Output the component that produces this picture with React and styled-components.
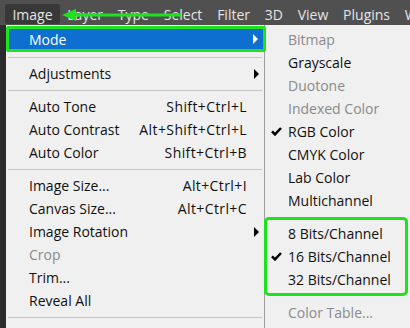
import React from "react";
import styled, { createGlobalStyle } from "styled-components";

const GlobalStyle = createGlobalStyle`
  html, body {
    margin: 0;
    padding: 0;
    background: #f0f0f0;
  }
`;

const GREEN = "#1fe21f";

const Page = styled.div`
  position: relative;
  width: 410px;
  height: 328px;
  overflow: hidden;
  background: #f0f0f0;
  font-family: "Open Sans", "Noto Sans", sans-serif;
  font-size: 14px;
`;

const MenuBar = styled.div`
  display: flex;
  align-items: flex-end;
  height: 24px;
  padding: 0 0 1px 5px;
  background: #505050;
  white-space: nowrap;
`;

const BarItem = styled.div`
  height: 20px;
  line-height: 21px;
  padding: 0 7.4px;
  border-radius: 2px;
  color: #e4e4e4;
  font-size: 14px;
  background: ${({ $active }) => ($active ? "#383838" : "transparent")};
`;

const Body = styled.div`
  display: flex;
  height: 303px;
`;

const Strip = styled.div`
  width: 6px;
  background: #2c2c2c;
`;

const Menu = styled.div`
  width: 258px;
  padding-top: 1px;
  border-right: 1px solid #9c9c9c;
  background: #f0f0f0;
`;

const Row = styled.div`
  display: flex;
  align-items: center;
  height: 23px;
  padding-left: 23px;
  white-space: nowrap;
  color: ${({ $disabled }) => ($disabled ? "#8a8a8a" : "#101010")};
`;

const ActiveRow = styled(Row)`
  position: relative;
  z-index: 1;
  height: 20px;
  margin-right: -2px;
  padding-left: 20px;
  border: 3px solid ${GREEN};
  border-radius: 2px;
  background: #0d6fd0;
  color: #ffffff;
`;

const Label = styled.span`
  flex: 1;
`;

const Shortcut = styled.span`
  text-align: right;
  letter-spacing: 0.4px;
`;

const ArrowCell = styled.span`
  display: flex;
  width: 17px;
  padding-left: 7px;
  box-sizing: border-box;
`;

const Triangle = styled.span`
  width: 0;
  height: 0;
  border-top: 5px solid transparent;
  border-bottom: 5px solid transparent;
  border-left: 5px solid ${({ $light }) => ($light ? "#ffffff" : "#000000")};
`;

const Separator = styled.div`
  height: 1px;
  margin: 5px 2px 4px 2px;
  background: #c6c6c6;
`;

const SubMenu = styled.div`
  flex: 1;
  padding-top: 3px;
  background: #f0f0f0;
`;

const SubRow = styled.div`
  display: grid;
  grid-template-columns: 23px 1fr;
  align-items: center;
  height: 23px;
  white-space: nowrap;
  color: ${({ $disabled }) => ($disabled ? "#8a8a8a" : "#101010")};
`;

const CheckCell = styled.span`
  display: flex;
  justify-content: center;
  padding-right: 1px;
`;

const Group = styled.div`
  margin: 5px 2px 5px -1px;
  padding: 2px 0;
  border: 3px solid ${GREEN};
  border-radius: 5px;

  & > ${SubRow} {
    margin-left: -2px;
  }
`;

const Overlay = styled.svg`
  position: absolute;
  left: 0;
  top: 0;
  pointer-events: none;
`;

const Check = () => (
  <svg width="11" height="9" viewBox="0 0 11 9">
    <path d="M1 4.3 L4 7.4 L10 1" fill="none" stroke="#000" strokeWidth="2.5" />
  </svg>
);

const barItems = ["Image", "Layer", "Type", "Select", "Filter", "3D", "View", "Plugins", "Window"];

const groups = [
  [{ label: "Adjustments", sub: true }],
  [
    { label: "Auto Tone", key: "Shift+Ctrl+L" },
    { label: "Auto Contrast", key: "Alt+Shift+Ctrl+L" },
    { label: "Auto Color", key: "Shift+Ctrl+B" },
  ],
  [
    { label: "Image Size...", key: "Alt+Ctrl+I" },
    { label: "Canvas Size...", key: "Alt+Ctrl+C" },
    { label: "Image Rotation", sub: true },
    { label: "Crop", disabled: true },
    { label: "Trim..." },
    { label: "Reveal All" },
  ],
];

const modes = [
  { label: "Bitmap", disabled: true },
  { label: "Grayscale" },
  { label: "Duotone", disabled: true },
  { label: "Indexed Color", disabled: true },
  { label: "RGB Color", checked: true },
  { label: "CMYK Color" },
  { label: "Lab Color" },
  { label: "Multichannel" },
];

const bits = [
  { label: "8 Bits/Channel" },
  { label: "16 Bits/Channel", checked: true },
  { label: "32 Bits/Channel" },
];

const renderSub = (item) => (
  <SubRow key={item.label} $disabled={item.disabled}>
    <CheckCell>{item.checked && <Check />}</CheckCell>
    <span>{item.label}</span>
  </SubRow>
);

export default function App() {
  return (
    <>
      <GlobalStyle />
      <Page>
        <MenuBar>
          {barItems.map((name, i) => (
            <BarItem key={name} $active={i === 0}>
              {name}
            </BarItem>
          ))}
        </MenuBar>
        <Body>
          <Strip />
          <Menu>
            <ActiveRow>
              <Label>Mode</Label>
              <ArrowCell>
                <Triangle $light />
              </ArrowCell>
            </ActiveRow>
            {groups.map((group, gi) => (
              <React.Fragment key={gi}>
                <Separator />
                {group.map((item) => (
                  <Row key={item.label} $disabled={item.disabled}>
                    <Label>{item.label}</Label>
                    {item.key && <Shortcut>{item.key}</Shortcut>}
                    <ArrowCell>{item.sub && <Triangle />}</ArrowCell>
                  </Row>
                ))}
              </React.Fragment>
            ))}
            <Separator />
          </Menu>
          <SubMenu>
            {modes.map(renderSub)}
            <Group>{bits.map(renderSub)}</Group>
            {renderSub({ label: "Color Table...", disabled: true })}
          </SubMenu>
        </Body>
        <Overlay width="410" height="30">
          <line x1="74" y1="15" x2="181" y2="15" stroke={GREEN} strokeWidth="3" />
          <polygon points="62,15 76,9 76,21" fill={GREEN} />
        </Overlay>
      </Page>
    </>
  );
}
